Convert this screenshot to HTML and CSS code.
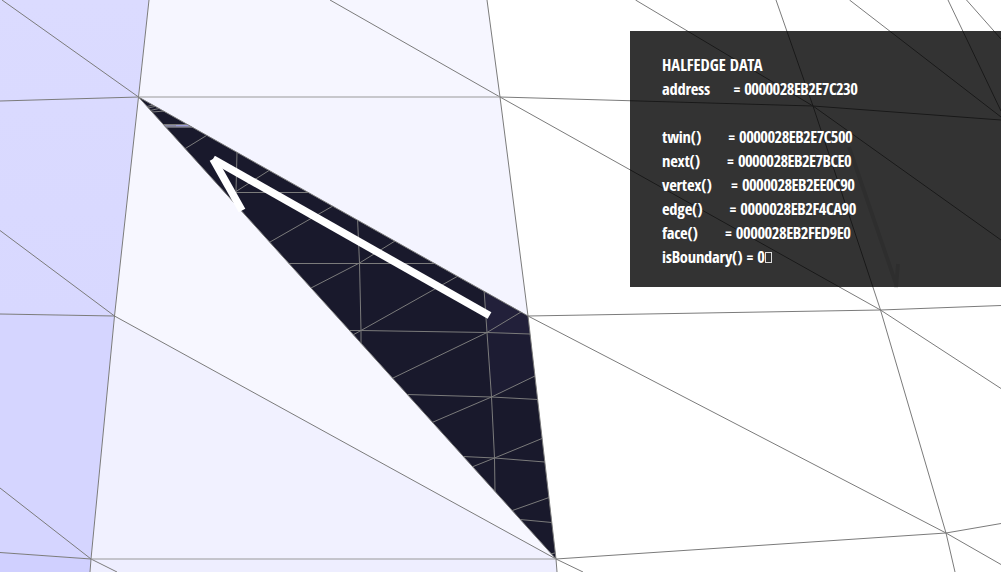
FILE: index.html
```html
<!DOCTYPE html>
<html lang="en">
<head>
<meta charset="utf-8">
<title>Halfedge Data</title>
<link rel="stylesheet" href="styles.css">
</head>
<body>
<main class="viewport">
<svg class="mesh" viewBox="0 0 1001 572" aria-hidden="true">
  <defs>
    <linearGradient id="left" x1="0" y1="0" x2="0" y2="1">
      <stop offset="0" stop-color="#dbdbff"/><stop offset="1" stop-color="#d8d8ff"/>
    </linearGradient>
    <clipPath id="hole"><path d="M138.5 97 528 316 556 559Z"/></clipPath>
  </defs>
  <g>
    <path fill="url(#left)" d="M0 0H149L138.5 97 114.500 316 0 314Z"/>
    <path fill="#d5d5ff" d="M0 314 114.500 316 91 559 0 552.500Z"/>
    <path fill="#d0d0ff" d="M0 552.500 91 559 90 572H0Z"/>
    <path fill="#f6f6ff" d="M149 0H487L500 97H138.500Z"/>
    <path fill="#f4f4ff" d="M138.500 97H500L528 316Z"/>
    <path fill="#f7f7ff" d="M138.500 97 556 559 114.500 316Z"/>
    <path fill="#f1f1ff" d="M114.500 316 556 559H91Z"/>
    <path fill="#eeeeff" d="M91 559H556L557 572H90Z"/>
  </g>
  <path fill="#19192c" d="M138.500 97 528 316 556 559Z"/>
  <g clip-path="url(#hole)">
    <path fill="#22203a" d="M484 288 528 316 530 334 487 332.500Z"/>
    <path fill="#1d1c33" d="M487 332.500 530 334 535 376 491.500 397Z"/>
    <path fill="#8a8aa8" d="M160 124H195V127.500H160Z"/>
    <path fill="#9c9cdc" d="M176 125H195V126.500H176Z"/>
    <path class="inner" d="M160 124.500H195M160 127H195M147 106.500 153 105M148 108 157 106M150 110.500 159 108.500M152 112 165 111
      M184.500 149 206.500 135.500M237 152 236 191.500 269 170.500M236 192.500H308M270 242 332 206.500M288 263.500H437
      M357.500 218 359.500 263 361 330.500V344M311 288 359.500 263 395 241M349 330.500H361L487 332.500 530 334M351 336 361 330.500 458 276
      M393 378 487 332.500 521 312M484 289 487 332.500 491.500 397 494.500 458 495 492M407 394.500 491.500 397 538 399.500M432 422.500 491.500 397 535 376
      M463 456.500 494.500 458 545 462M472 467 494.500 458 542 438.500M511 511 549 497.500M520 519.500 552 522.500M550 554 555 553"/>
  </g>
  <path class="wire" d="M2 0 138.500 97M0 101 138.500 97M149 0 138.500 97 114.500 316 91 559 90 572
    M0 230.500 114.500 316M0 314 114.500 316M0 488 91 559M0 552.500 91 559 117 572M114.500 316 556 559
    M330 0 500 97M487 0 500 97 528 316 556 559 557 572M556 559 583 572M138.500 97 528 316 946 533 1001 564.500M138.500 97 556 559
    M500 97 813 106 1001 120M500 97 880.500 310 1001 388.500M635.500 0 813 106 1001 240M776 0 813 106 880.500 310 946 533 955 572
    M849.500 0 1001 117M948 0 1001 111M966.500 0 1001 39M528 316 880.500 310 1001 305.500M556 559 946 533 1001 523.500"/>
  <path class="wire level" d="M138.500 97H500M91 559H556"/>
  <path class="ghost" d="M849 147 896 284M896 288 898 264"/>
  <path class="arrow" d="M213 159 489.500 315.500"/>
  <path class="arrow" d="M213 159 242 210.500"/>
</svg>
<aside class="panel">
<pre class="data">HALFEDGE DATA
<span class="label">address      = </span><span class="pointer">0000028EB2E7C230</span>

<span class="label">twin()       = </span><span class="pointer">0000028EB2E7C500</span>
<span class="label">next()       = </span><span class="pointer">0000028EB2E7BCE0</span>
<span class="label">vertex()     = </span><span class="pointer">0000028EB2EE0C90</span>
<span class="label">edge()       = </span><span class="pointer wide">0000028EB2F4CA90</span>
<span class="label">face()       = </span><span class="pointer wide">0000028EB2FED9E0</span>
<span class="label">isBoundary() = </span>0<span class="missing"></span></pre>
</aside>
</main>
</body>
</html>
```
FILE: styles.css
```css
body {
  margin: 0;
  background: #fff;
}

.viewport {
  position: relative;
  width: 1001px;
  height: 572px;
  overflow: hidden;
}

.mesh {
  display: block;
  width: 1001px;
  height: 572px;
}

.wire,
.inner {
  fill: none;
  stroke: #7b7b7b;
  stroke-width: 1;
}

.level {
  stroke: #999;
}

.ghost {
  fill: none;
  stroke: #e6e6e6;
  stroke-width: 4;
}

.arrow {
  fill: none;
  stroke: #fff;
  stroke-width: 7.600;
}

.panel {
  position: absolute;
  top: 31px;
  right: 0;
  box-sizing: border-box;
  width: 371px;
  height: 256px;
  padding: 22px 32px;
  background: rgba(0, 0, 0, 0.8);
}

.data {
  margin: 0;
  color: #fff;
  font-family: "Open Sans Condensed", "Open Sans", sans-serif;
  font-size: 16.5px;
  font-weight: 700;
  font-stretch: 75%;
  line-height: 24px;
}

.label {
  letter-spacing: -0.22px;
}

.pointer {
  letter-spacing: -0.54px;
}

.wide {
  letter-spacing: -0.44px;
}

.missing {
  display: inline-block;
  box-sizing: border-box;
  width: 7px;
  height: 11px;
  border: 1px solid #ddd;
}
```
